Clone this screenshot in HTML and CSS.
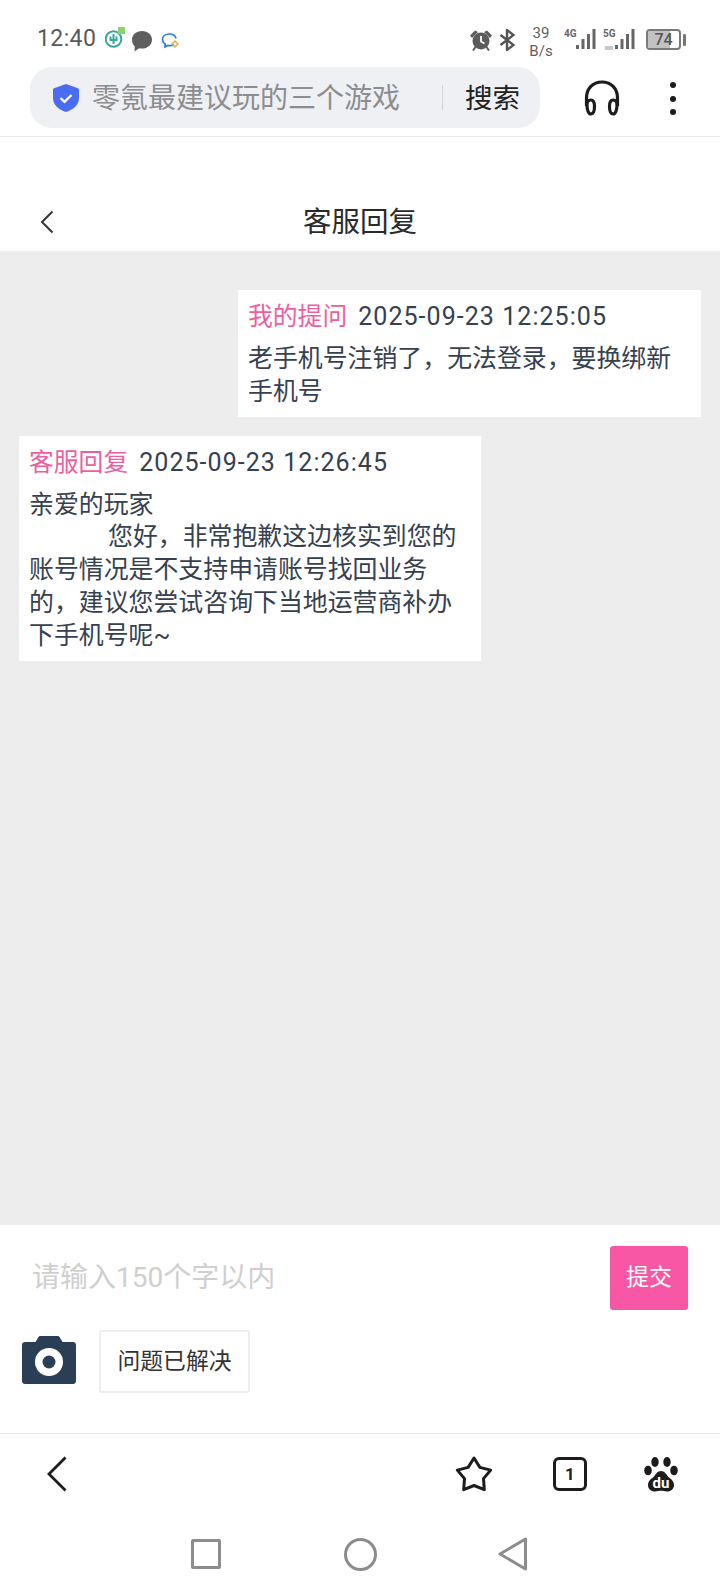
FILE: index.html
```html
<!DOCTYPE html>
<html lang="zh">
<head>
<meta charset="utf-8">
<title>客服回复</title>
<link rel="stylesheet" href="styles.css">
</head>
<body>
<div class="page">
  <div class="status">
    <span class="time">12:40</span>
    <svg class="ni ni1" viewBox="0 0 20 21" width="20" height="21"><circle cx="8.500" cy="12" r="7.800" fill="none" stroke="#38a89a" stroke-width="2"/><path d="M8.500 7v10M5.500 9.500v3.500h6V9.500" fill="none" stroke="#38a89a" stroke-width="2"/><rect x="13" y="0" width="7" height="7" fill="#8fd16f"/></svg>
    <svg class="ni ni2" viewBox="0 0 22 22" width="22" height="22"><path d="M11 1c5.800 0 10 3.800 10 8.800s-4.200 8.800-10 8.800c-1 0-2-.1-2.900-.4L3.500 21.500l.3-5C2 14.900 1 12.500 1 9.800 1 4.800 5.200 1 11 1z" fill="#5f5f5f"/></svg>
    <svg class="ni ni3" viewBox="0 0 18 18" width="18" height="18"><path d="M13 12.500c-1 .8-2.300 1.200-4 1.200-.8 0-1.600-.1-2.300-.3L4 15l.2-3C2.500 11 1.500 9.400 1.500 7.500 1.500 4 4.700 2 8.500 2c3.300 0 6 1.600 6.500 4.500" fill="none" stroke="#2b7fd8" stroke-width="1.700"/><path d="M14 9l3 3-3 3-3-3z" fill="none" stroke="#e3b04b" stroke-width="1.500"/></svg>
    <div class="spacer"></div>
    <svg class="si alarm" viewBox="0 0 22 22" width="22" height="22"><circle cx="11" cy="12" r="8.500" fill="#5c5c5c"/><path d="M0 6.500l5-5 3 1.500-6 6zM22 6.500l-5-5-3 1.500 6 6z" fill="#5c5c5c"/><path d="M5.500 18l-2.500 3.500M16.500 18l2.500 3.500" stroke="#5c5c5c" stroke-width="2" fill="none"/><path d="M11 7v5.500l3.500 2" fill="none" stroke="#fff" stroke-width="1.800"/></svg>
    <svg class="si bt" viewBox="0 0 16 22" width="16" height="22"><path d="M1.500 6l13 10L8 21V1l6.500 5-13 10" fill="none" stroke="#555" stroke-width="2.400"/></svg>
    <div class="speed"><span>39</span><span>B/s</span></div>
    <div class="net">
      <span class="gen">4G</span>
      <svg viewBox="0 0 20 20" width="20" height="20"><path d="M0 16h3v4H0zM5.500 10h3v10h-3zM11 5h3v15h-3zM16.500 0h3v20h-3z" fill="#666"/></svg>
    </div>
    <div class="net">
      <span class="gen">5G</span>
      <svg viewBox="0 0 20 20" width="20" height="20"><path d="M0 16h3v4H0zM5.500 10h3v10h-3zM11 5h3v15h-3zM16.500 0h3v20h-3z" fill="#666"/></svg>
      <span class="hd"></span>
    </div>
    <div class="battery"><div class="batbody"><div class="batfill"></div><span class="batnum">74</span></div><div class="batnub"></div></div>
  </div>

  <div class="urlrow">
    <div class="urlbar">
      <svg class="shield" viewBox="0 0 26 28" width="26" height="28"><path d="M13 0l12 4.200c.6.200 1 .8 1 1.400V14c0 7-5.500 11.500-13 14C5.500 25.500 0 21 0 14V5.600C0 5 .4 4.400 1 4.200z" fill="#4a6cf0"/><path d="M7.500 14l4 3.800 7-6.800" fill="none" stroke="#fff" stroke-width="2.400"/></svg>
      <span class="urltext">零氪最建议玩的三个游戏</span>
      <span class="urldiv"></span>
      <span class="urlsearch">搜索</span>
    </div>
    <svg class="phones" viewBox="0 0 36 36" width="36" height="36"><path d="M2.500 26V18C2.500 8.500 9 2 18 2s15.500 6.500 15.500 16v8" fill="none" stroke="#1c1c1c" stroke-width="3.200"/><path d="M3 25c0-3 1.500-5 3.800-5S10.500 22 10.500 26.500 9 34 6.800 34 3 30 3 25zM33 25c0-3-1.500-5-3.800-5s-3.700 2-3.700 6.500 1.500 7.500 3.700 7.500S33 30 33 25z" fill="none" stroke="#1c1c1c" stroke-width="3.200"/></svg>
    <div class="dots"><i></i><i></i><i></i></div>
  </div>

  <header class="titlebar">
    <svg class="tback" viewBox="0 0 14 24" width="14" height="24"><path d="M12.500 1.500L2 12l10.500 10.500" fill="none" stroke="#333" stroke-width="2"/></svg>
    <h1>客服回复</h1>
  </header>

  <main class="chat">
    <section class="bubble mine">
      <div class="meta"><span class="who">我的提问</span><span class="date">2025-09-23 12:25:05</span></div>
      <p class="body">老手机号注销了，无法登录，要换绑新手机号</p>
    </section>
    <section class="bubble theirs">
      <div class="meta"><span class="who">客服回复</span><span class="date">2025-09-23 12:26:45</span></div>
      <p class="body">亲爱的玩家<br><span class="indent"></span>您好，非常抱歉这边核实到您的账号情况是不支持申请账号找回业务的，建议您尝试咨询下当地运营商补办下手机号呢~</p>
    </section>
  </main>

  <div class="composer">
    <div class="inputrow">
      <span class="placeholder">请输入150个字以内</span>
      <span class="submit">提交</span>
    </div>
    <div class="toolrow">
      <svg class="camera" viewBox="0 0 54 48" width="54" height="48"><path d="M3 6h10.500l3-5c.3-.6 1-1 1.700-1h17.600c.7 0 1.400.4 1.700 1l3 5H51c1.700 0 3 1.300 3 3v36c0 1.700-1.300 3-3 3H3c-1.700 0-3-1.300-3-3V9c0-1.700 1.300-3 3-3z" fill="#2a3f56"/><circle cx="27" cy="26" r="14" fill="#fff"/><circle cx="27" cy="26" r="6.500" fill="#2a3f56"/></svg>
      <span class="solved">问题已解决</span>
    </div>
  </div>

  <nav class="browsernav">
    <svg class="bback" viewBox="0 0 20 36" width="20" height="36"><path d="M18.500 1.500L2 18l16.500 16.500" fill="none" stroke="#1c1c1c" stroke-width="2.800"/></svg>
    <div class="spacer"></div>
    <svg class="star" viewBox="0 0 38 36" width="38" height="36"><path d="M19 2l5.880 9.410 10.760 2.680-7.130 8.500.78 11.070L19 29.500l-10.290 4.160.78-11.070-7.130-8.500 10.760-2.680z" fill="none" stroke="#1c1c1c" stroke-width="3" stroke-linejoin="round"/></svg>
    <div class="tabs">1</div>
    <svg class="paw" viewBox="0 0 34 36" width="34" height="36"><ellipse cx="11" cy="6" rx="3.700" ry="5" fill="#1c1c1c"/><ellipse cx="23" cy="6" rx="3.700" ry="5" fill="#1c1c1c"/><ellipse cx="4" cy="14.500" rx="3.800" ry="4.800" fill="#1c1c1c"/><ellipse cx="30" cy="14.500" rx="3.800" ry="4.800" fill="#1c1c1c"/><path d="M17 15c3.500 0 5 3 7 5.500 2.500 2.500 6 4 6 8.500 0 4-3 6.500-7 6.500-2.500 0-4-.7-6-.7s-3.500.7-6 .7c-4 0-7-2.500-7-6.500 0-4.500 3.500-6 6-8.500 2-2.500 3.500-5.500 7-5.500z" fill="#1c1c1c"/><text class="pawtext" x="17" y="32" text-anchor="middle">du</text></svg>
  </nav>

  <nav class="sysnav">
    <span class="sqr"></span>
    <span class="circ"></span>
    <svg class="tri" viewBox="0 0 30 34" width="30" height="34"><path d="M2 17L27.500 2v30z" fill="none" stroke="#8c8c8c" stroke-width="3" stroke-linejoin="round"/></svg>
  </nav>
</div>
</body>
</html>
```

FILE: styles.css
```css
* { box-sizing: border-box; }
html, body { margin: 0; padding: 0; background: #fff; }
body { font-family: Roboto, "Noto Sans CJK SC", sans-serif; color: #36414f; }
.page { width: 720px; height: 1592px; display: flex; flex-direction: column; overflow: hidden; }
.spacer { flex: 1; }

.status { height: 67px; flex: none; padding: 27px 34px 0 37px; display: flex; align-items: flex-start; }
.time { font-size: 23px; line-height: 24px; color: #5a5a5a; letter-spacing: .4px; width: 68px; }
.ni { display: block; }
.ni1 { margin-right: 6px; }
.ni2 { margin-right: 8px; margin-top: 3px; }
.ni3 { margin-top: 5px; }
.si { display: block; margin-top: 2px; }
.alarm { margin-right: 7px; }
.bt { margin-right: 13px; }
.speed { width: 26px; margin-right: 10px; display: flex; flex-direction: column; align-items: center; font-size: 15px; line-height: 18px; color: #5f5f5f; margin-top: -3px; }
.net { position: relative; width: 36px; margin-right: 3px; display: flex; align-items: flex-start; height: 24px; }
.gen { font-size: 10px; line-height: 10px; font-weight: 700; color: #666; width: 12px; margin-top: 2px; flex: none; }
.net svg { display: block; flex: none; margin-top: 2px; }
.hd { position: absolute; left: 2px; top: 19px; width: 8px; height: 4px; background: #c8c8c8; }
.battery { display: flex; align-items: center; margin-top: 2px; margin-left: 4px; }
.batbody { position: relative; width: 35px; height: 21px; border: 2px solid #7a7a7a; border-radius: 4px; overflow: hidden; }
.batfill { width: 72%; height: 100%; background: #c2c2c2; }
.batnum { position: absolute; inset: 0; text-align: center; font-size: 16px; line-height: 17px; font-weight: 500; color: #555; }
.batnub { width: 3px; height: 12px; background: #777; margin-left: 2px; border-radius: 1px; }

.urlrow { height: 70px; flex: none; padding: 0 0 8px 30px; display: flex; align-items: flex-start; border-bottom: 1px solid #e9e9e9; }
.urlbar { width: 510px; height: 61px; background: #eff0f3; border-radius: 22px; display: flex; align-items: center; padding-left: 23px; }
.shield { display: block; flex: none; }
.urltext { width: 350px; margin-left: 13px; padding-top: 3px; font-size: 28px; line-height: 36px; color: #8b8d91; white-space: nowrap; }
.urldiv { width: 1px; height: 25px; background: #d5d6d9; flex: none; }
.urlsearch { margin-left: 22px; padding-top: 3px; font-size: 27.500px; line-height: 36px; color: #222; white-space: nowrap; }
.phones { display: block; margin: 13px 0 0 44px; flex: none; }
.dots { margin: 15px 0 0 50px; display: flex; flex-direction: column; gap: 7.500px; }
.dots i { display: block; width: 6px; height: 6px; border-radius: 50%; background: #1c1c1c; }

.titlebar { height: 114px; flex: none; position: relative; display: flex; align-items: center; justify-content: center; padding-top: 58px; }
.titlebar h1 { margin: 0; font-size: 28.500px; line-height: 40px; font-weight: 400; color: #2a2a2a; }
.tback { position: absolute; left: 40px; top: 73px; }

.chat { flex: 1; min-height: 0; background: #ededed; padding: 39px 19px 0; display: flex; flex-direction: column; gap: 19px; align-items: flex-start; }
.bubble { width: 462px; background: #fff; padding: 9px 10px 8px; }
.mine { align-self: flex-end; width: 463px; }
.meta { display: flex; align-items: center; gap: 11px; height: 35px; margin-bottom: 9px; }
.who { font-size: 24.800px; line-height: 35px; color: #ec5f9f; white-space: nowrap; }
.date { font-size: 25px; line-height: 35px; color: #36414f; letter-spacing: 1.050px; white-space: nowrap; }
.body { margin: 0; font-size: 24.900px; line-height: 32.800px; color: #36414f; }
.indent { display: inline-block; width: 79px; }

.composer { height: 208px; flex: none; display: flex; flex-direction: column; }
.inputrow { display: flex; align-items: flex-start; justify-content: space-between; padding: 21px 32px 0 32px; height: 105px; flex: none; }
.placeholder { margin-top: 1px; font-size: 28px; line-height: 62px; color: #cfcfcf; white-space: nowrap; }
.submit { width: 78px; height: 64px; background: #f857a6; border-radius: 3px; color: #fff; font-size: 23px; line-height: 64px; text-align: center; }
.toolrow { display: flex; align-items: flex-start; padding-left: 22px; }
.camera { display: block; margin-top: 6px; flex: none; }
.solved { margin-left: 23px; width: 151px; height: 63px; border: 2px solid #eee; border-radius: 3px; font-size: 22.800px; line-height: 59px; text-align: center; color: #333; }

.browsernav { height: 88px; flex: none; border-top: 1px solid #e8e8e8; padding: 22px 0 0 47px; display: flex; align-items: flex-start; }
.bback { display: block; flex: none; }
.star { display: block; flex: none; margin-right: 60px; }
.tabs { width: 34px; height: 34px; border: 3px solid #1c1c1c; border-radius: 6px; font-size: 17px; line-height: 28px; font-weight: 700; text-align: center; color: #222; margin-right: 57px; margin-top: 1px; }
.paw { display: block; flex: none; margin-right: 42px; }
.pawtext { font-family: Roboto, sans-serif; font-size: 15px; font-weight: 700; fill: #fff; }

.sysnav { height: 71px; flex: none; display: flex; align-items: flex-start; padding: 18px 0 0 191px; }
.sqr { display: block; width: 30px; height: 30px; border: 3px solid #8c8c8c; border-radius: 2px; flex: none; }
.circ { display: block; width: 33px; height: 33px; border: 3px solid #8c8c8c; border-radius: 50%; margin: -1px 0 0 123px; flex: none; }
.tri { display: block; margin: -2px 0 0 121px; flex: none; }
```
